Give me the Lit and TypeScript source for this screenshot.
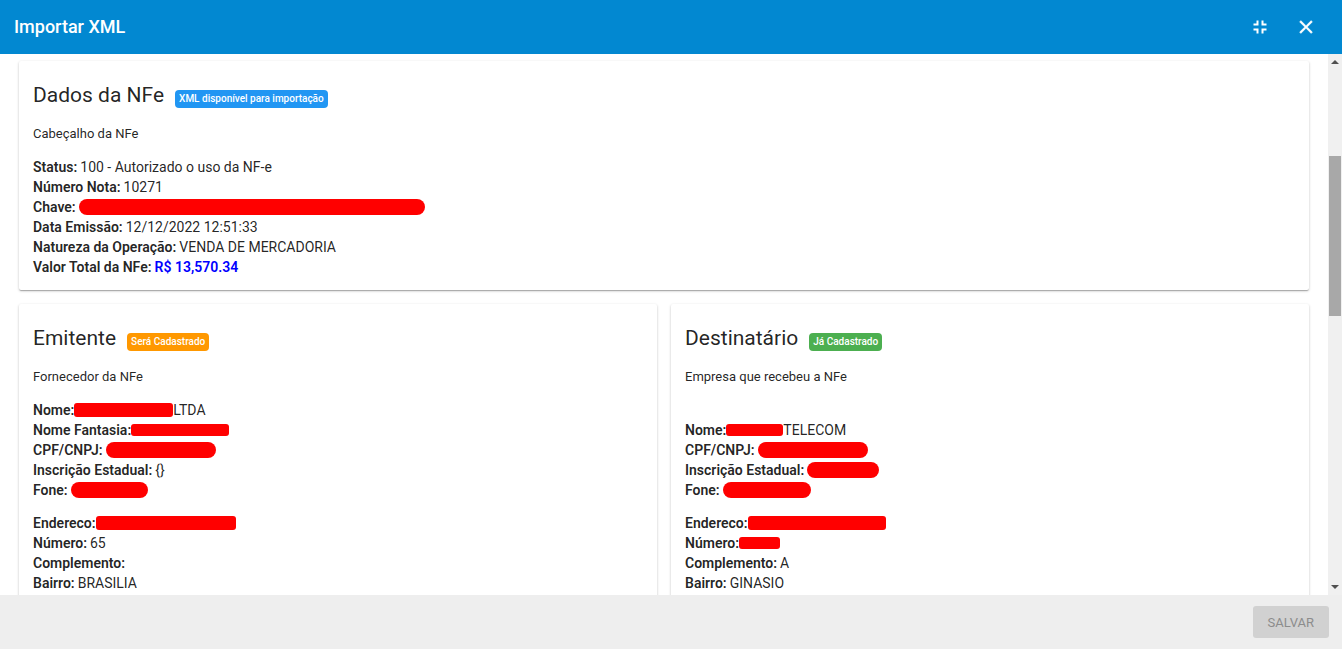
import { LitElement, html, css, nothing } from "lit";
import { customElement, property } from "lit/decorators.js";

type Bar = { width: number; kind: "thin" | "block" | "pill"; spaced?: boolean };
type Field = { label: string; value?: string; bar?: Bar; money?: boolean };

const bar = (width: number, kind: Bar["kind"], spaced = false): Bar => ({ width, kind, spaced });

const NFE: Field[][] = [
  [
    { label: "Status:", value: "100 - Autorizado o uso da NF-e" },
    { label: "Número Nota:", value: "10271" },
    { label: "Chave:", bar: bar(346, "pill", true) },
    { label: "Data Emissão:", value: "12/12/2022 12:51:33" },
    { label: "Natureza da Operação:", value: "VENDA DE MERCADORIA" },
    { label: "Valor Total da NFe:", value: "R$ 13,570.34", money: true },
  ],
];

const EMITENTE: Field[][] = [
  [
    { label: "Nome:", bar: bar(99, "block"), value: "LTDA" },
    { label: "Nome Fantasia:", bar: bar(98, "thin") },
    { label: "CPF/CNPJ:", bar: bar(110, "pill", true) },
    { label: "Inscrição Estadual:", value: "{}" },
    { label: "Fone:", bar: bar(77, "pill", true) },
  ],
  [
    { label: "Endereco:", bar: bar(140, "block") },
    { label: "Número:", value: "65" },
    { label: "Complemento:" },
    { label: "Bairro:", value: "BRASILIA" },
  ],
];

const DESTINATARIO: Field[][] = [
  [
    { label: "Nome:", bar: bar(57, "thin"), value: "TELECOM" },
    { label: "CPF/CNPJ:", bar: bar(110, "pill", true) },
    { label: "Inscrição Estadual:", bar: bar(72, "pill", true) },
    { label: "Fone:", bar: bar(88, "pill", true) },
  ],
  [
    { label: "Endereco:", bar: bar(138, "block") },
    { label: "Número:", bar: bar(41, "thin") },
    { label: "Complemento:", value: "A" },
    { label: "Bairro:", value: "GINASIO" },
  ],
];

@customElement("info-card")
class InfoCard extends LitElement {
  @property() heading = "";
  @property() badge = "";
  @property() tone = "info";
  @property() caption = "";
  @property({ type: Boolean }) spaced = false;
  @property({ attribute: false }) groups: Field[][] = [];

  static styles = css`
    :host {
      display: block;
      box-sizing: border-box;
      min-width: 0;
      padding: 14px 14px 13px;
      background: #fff;
      border-radius: 2px;
      box-shadow: 0 1px 3px rgba(0, 0, 0, 0.2), 0 1px 1px rgba(0, 0, 0, 0.14),
        0 2px 1px -1px rgba(0, 0, 0, 0.12);
    }
    header {
      display: flex;
      align-items: center;
      gap: 11px;
      height: 40px;
    }
    h2 {
      margin: 0;
      font-size: 21px;
      font-weight: 400;
      line-height: 40px;
    }
    .badge {
      margin-top: 8px;
      padding: 0 4px;
      border-radius: 4px;
      color: #fff;
      font-size: 10px;
      font-weight: 500;
      line-height: 18px;
      white-space: nowrap;
    }
    .info { background: #2196f3; }
    .warn { background: #ff9800; }
    .ok { background: #4caf50; }
    .caption {
      margin: 9px 0 13px;
      font-size: 13px;
      line-height: 20px;
    }
    .caption.spaced { margin-bottom: 33px; }
    dl { margin: 0; }
    dl + dl { margin-top: 13px; }
    .row {
      display: flex;
      align-items: center;
      height: 20px;
      font-size: 14px;
      line-height: 20px;
      white-space: nowrap;
    }
    dt { font-weight: 600; }
    dd { margin: 0 0 0 3px; }
    .money { color: #00f; font-weight: 600; }
    .bar {
      flex: none;
      background: #f00;
    }
    .bar + dd { margin-left: 0; }
    .thin { height: 12px; border-radius: 3px; }
    .block { height: 14px; border-radius: 3px; }
    .pill { height: 16px; border-radius: 8px; }
    .bar.apart { margin-left: 3px; }
  `;

  render() {
    return html`
      <header>
        <h2>${this.heading}</h2>
        <span class="badge ${this.tone}">${this.badge}</span>
      </header>
      <p class="caption ${this.spaced ? "spaced" : ""}">${this.caption}</p>
      ${this.groups.map(
        (g) => html`<dl>
          ${g.map(
            (f) => html`<div class="row">
              <dt>${f.label}</dt>
              ${f.bar
                ? html`<span
                    class="bar ${f.bar.kind} ${f.bar.spaced ? "apart" : ""}"
                    style="width:${f.bar.width}px"
                  ></span>`
                : nothing}
              ${f.value ? html`<dd class=${f.money ? "money" : ""}>${f.value}</dd>` : nothing}
            </div>`
          )}
        </dl>`
      )}
    `;
  }
}

@customElement("app-root")
class AppRoot extends LitElement {
  static styles = css`
    :host {
      display: flex;
      flex-direction: column;
      height: 100vh;
      overflow: hidden;
      background: #fff;
      color: rgba(0, 0, 0, 0.87);
      font-family: Roboto, "Liberation Sans", sans-serif;
    }
    .toolbar {
      display: flex;
      align-items: center;
      flex: none;
      height: 54px;
      padding: 0 24px 0 14px;
      background: #0288d1;
      color: #fff;
    }
    h1 {
      flex: 1;
      margin: 0;
      font-size: 18px;
      font-weight: 500;
      line-height: 24px;
    }
    .icons { display: flex; gap: 22px; }
    .icon {
      display: grid;
      place-items: center;
      width: 24px;
      height: 24px;
      padding: 0;
      border: 0;
      background: none;
      color: inherit;
    }
    .icon svg { display: block; fill: currentColor; }
    .body {
      display: flex;
      flex: 1;
      min-height: 0;
    }
    .content {
      flex: 1;
      min-width: 0;
      overflow-y: auto;
      scrollbar-width: none;
      padding: 7px 19px 0;
    }
    .grid {
      display: grid;
      grid-template-columns: 1fr 1fr;
      gap: 14px;
    }
    .wide { grid-column: 1 / -1; }
    .scroll {
      display: flex;
      flex-direction: column;
      align-items: center;
      flex: none;
      width: 14px;
      background: #f0f0f0;
    }
    .scroll svg { display: block; flex: none; fill: #505050; }
    .before { flex: 86; }
    .thumb {
      flex: 160;
      width: 12px;
      background: #a8a8a8;
    }
    .after { flex: 263; }
    .footer {
      display: flex;
      align-items: center;
      justify-content: flex-end;
      flex: none;
      height: 54px;
      padding: 0 13px;
      background: #eee;
    }
    .save {
      height: 32px;
      padding: 0 15px;
      border: 0;
      border-radius: 3px;
      background: #d1d1d1;
      color: #8c8c8c;
      font-family: inherit;
      font-size: 13px;
      font-weight: 400;
    }
  `;

  render() {
    return html`
      <header class="toolbar">
        <h1>Importar XML</h1>
        <div class="icons">
          <button class="icon" aria-label="Restaurar">
            <svg width="14" height="14" viewBox="0 0 14 14">
              <path d="M3.500 0.500h2v5H0.500v-2h3zM8.500 0.500h2v3h3v2h-5zM0.500 8.500h5v5h-2v-3h-3zM8.500 8.500h5v2h-3v3h-2z" />
            </svg>
          </button>
          <button class="icon" aria-label="Fechar">
            <svg width="22" height="22" viewBox="0 0 24 24">
              <path stroke="currentColor" stroke-width="0.5" d="M19 6.41L17.59 5 12 10.59 6.41 5 5 6.41 10.59 12 5 17.59 6.41 19 12 13.41 17.59 19 19 17.59 13.41 12z" />
            </svg>
          </button>
        </div>
      </header>
      <div class="body">
        <main class="content">
          <div class="grid">
            <info-card
              class="wide"
              heading="Dados da NFe"
              badge="XML disponível para importação"
              tone="info"
              caption="Cabeçalho da NFe"
              .groups=${NFE}
            ></info-card>
            <info-card
              heading="Emitente"
              badge="Será Cadastrado"
              tone="warn"
              caption="Fornecedor da NFe"
              .groups=${EMITENTE}
            ></info-card>
            <info-card
              heading="Destinatário"
              badge="Já Cadastrado"
              tone="ok"
              caption="Empresa que recebeu a NFe"
              spaced
              .groups=${DESTINATARIO}
            ></info-card>
          </div>
        </main>
        <div class="scroll" aria-hidden="true">
          <svg width="14" height="16" viewBox="0 0 14 16"><path d="M3 10l4-4 4 4z" /></svg>
          <div class="before"></div>
          <div class="thumb"></div>
          <div class="after"></div>
          <svg width="14" height="16" viewBox="0 0 14 16"><path d="M3 6l4 4 4-4z" /></svg>
        </div>
      </div>
      <footer class="footer">
        <button class="save" disabled>SALVAR</button>
      </footer>
    `;
  }
}
